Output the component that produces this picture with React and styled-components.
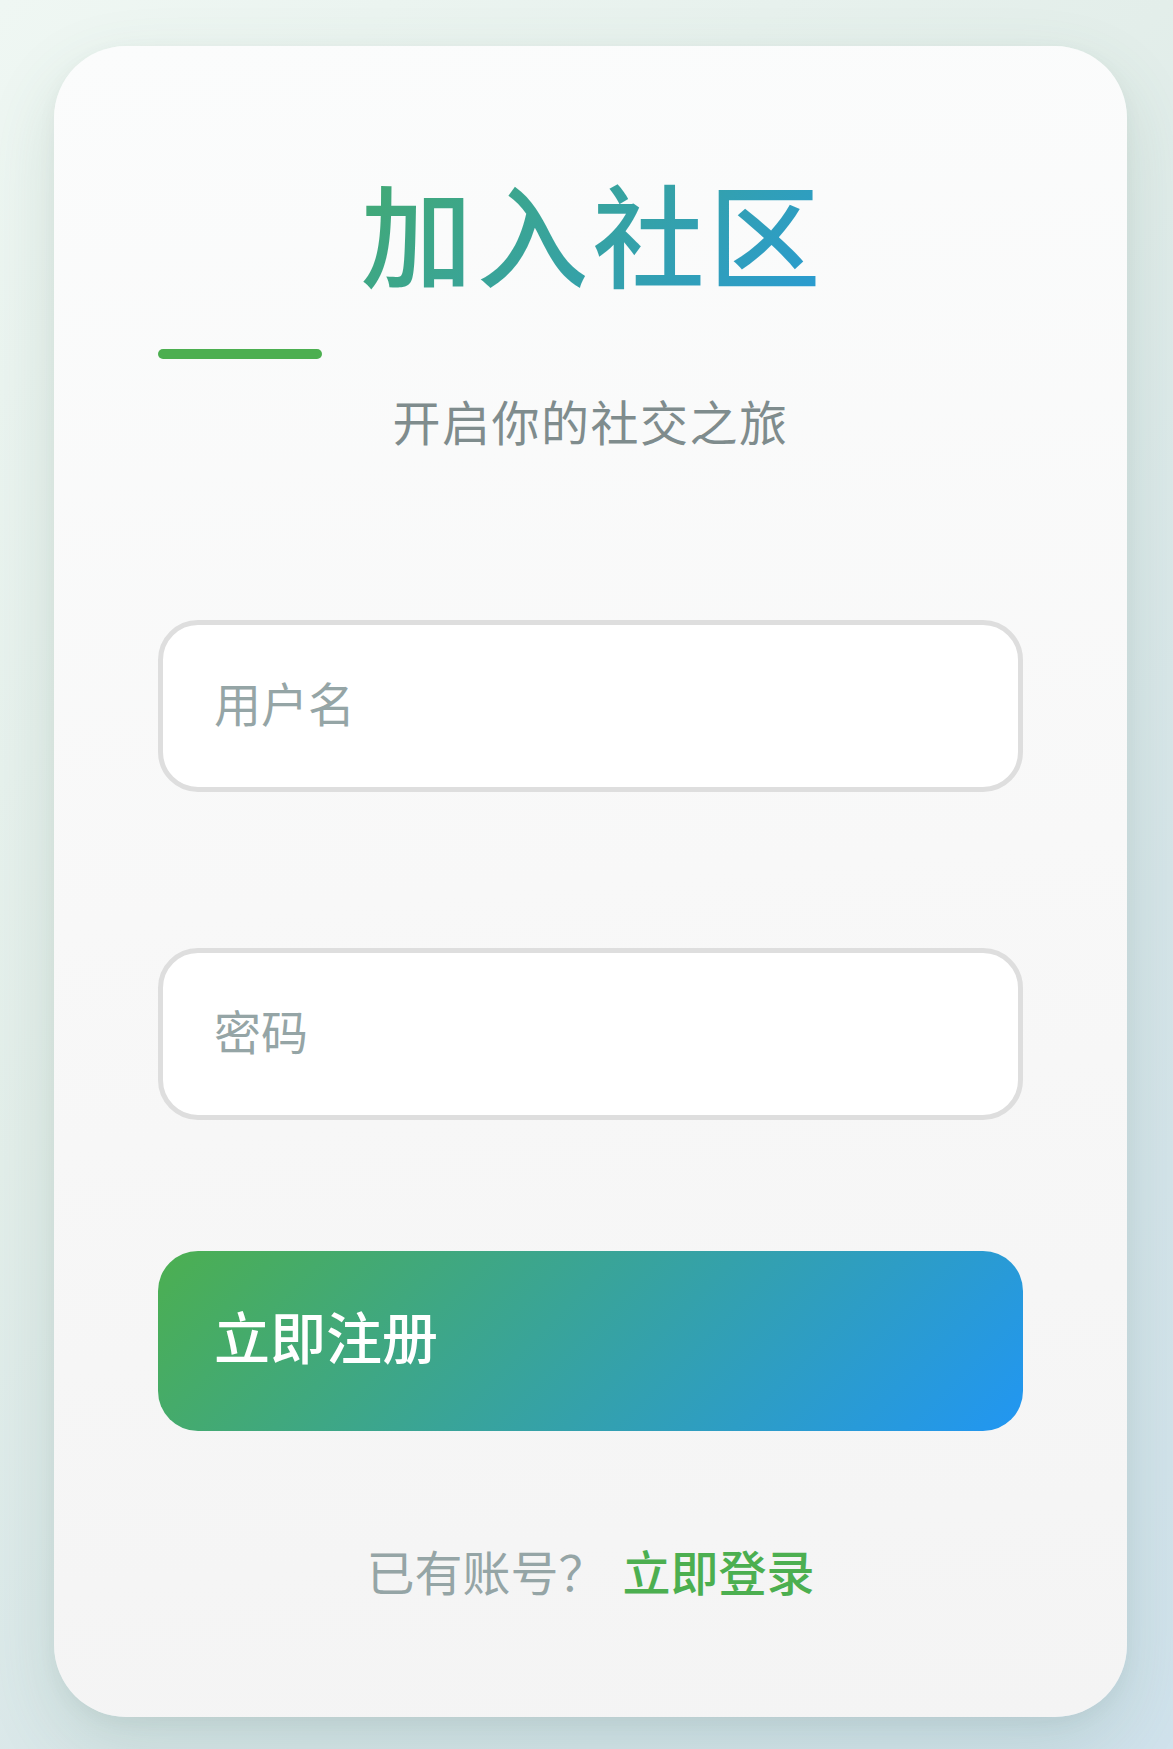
import React from "react";
import styled, { createGlobalStyle } from "styled-components";

const GlobalStyle = createGlobalStyle`
  * { box-sizing: border-box; }
  html, body { margin: 0; padding: 0; }
  body {
    font-family: "Noto Sans CJK SC", "Noto Sans", sans-serif;
    background: linear-gradient(135deg, #eff7f3 0%, #e3eeea 40%, #d6e5e9 70%, #d0e2ec 100%);
    min-height: 1749px;
  }
`;

const Page = styled.main`
  min-height: 1749px;
  padding: 46px 46px 33px 54px;
  display: flex;
  align-items: flex-start;
`;

const Card = styled.section`
  width: 1073px;
  border-radius: 72px;
  background: linear-gradient(175deg, #fbfcfc 0%, #f8f8f8 50%, #f4f4f4 100%);
  box-shadow: 0 28px 70px rgba(70, 120, 95, 0.16), 0 6px 20px rgba(0, 0, 0, 0.04);
  padding: 118px 104px 111px;
  display: flex;
  flex-direction: column;
`;

const Title = styled.h1`
  margin: 0;
  padding-left: 4px;
  font-size: 112px;
  line-height: 1.2;
  font-weight: 500;
  letter-spacing: 4px;
  text-align: center;
  background: linear-gradient(135deg, #4caf50 0%, #2196f3 100%);
  -webkit-background-clip: text;
  background-clip: text;
  color: transparent;
`;

const Accent = styled.div`
  margin-top: 51px;
  width: 164px;
  height: 10px;
  border-radius: 5px;
  background: #4caf50;
`;

const Subtitle = styled.p`
  margin: 25px 0 0;
  font-size: 48px;
  line-height: 1.5;
  letter-spacing: 1.5px;
  color: #7f8c8d;
  text-align: center;
`;

const Form = styled.form`
  margin-top: 164px;
  display: flex;
  flex-direction: column;
`;

const Field = styled.input`
  display: block;
  width: 100%;
  height: 172px;
  margin-top: ${(p) => p.$gap || 0}px;
  padding: 0 51px 10px;
  border: 5px solid #dedede;
  border-radius: 40px;
  background: #ffffff;
  font-family: "Noto Sans CJK SC", "Noto Sans", sans-serif;
  font-size: 47px;
  color: #2c3e50;
  outline: none;
  &::placeholder {
    color: #95a5a6;
  }
`;

const Submit = styled.button`
  display: block;
  width: 100%;
  height: 180px;
  margin-top: 131px;
  padding: 0 56px 14px;
  border: none;
  border-radius: 40px;
  background: linear-gradient(135deg, #4caf50 0%, #2196f3 100%);
  color: #ffffff;
  font-family: "Noto Sans CJK SC", "Noto Sans", sans-serif;
  font-size: 56px;
  font-weight: 500;
  text-align: left;
  cursor: pointer;
`;

const Footer = styled.p`
  margin: 103px 0 0;
  font-size: 48px;
  line-height: 1.5;
  color: #95a5a6;
  text-align: center;
`;

const LoginLink = styled.a`
  margin-left: 16px;
  color: #4caf50;
  font-weight: 500;
  text-decoration: none;
`;

export default function App() {
  return (
    <>
      <GlobalStyle />
      <Page>
        <Card>
          <Title>加入社区</Title>
          <Accent />
          <Subtitle>开启你的社交之旅</Subtitle>
          <Form onSubmit={(e) => e.preventDefault()}>
            <Field type="text" placeholder="用户名" />
            <Field type="password" placeholder="密码" $gap={156} />
            <Submit type="submit">立即注册</Submit>
          </Form>
          <Footer>
            已有账号？<LoginLink href="#">立即登录</LoginLink>
          </Footer>
        </Card>
      </Page>
    </>
  );
}
